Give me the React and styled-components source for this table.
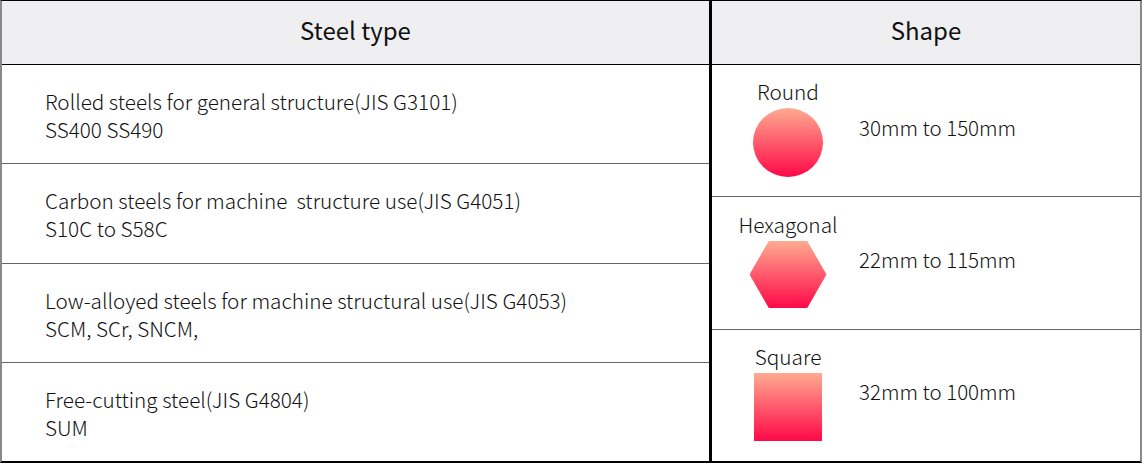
import React from "react";
import styled, { createGlobalStyle } from "styled-components";

const GlobalStyle = createGlobalStyle`
  body {
    margin: 0;
    background: #fff;
    font-family: "Noto Sans CJK JP", "Noto Sans", sans-serif;
    color: #111;
  }
`;

const Table = styled.div`
  box-sizing: border-box;
  width: 1142px;
  height: 463px;
  display: flex;
  border-top: 1px solid #000;
  border-bottom: 2px solid #000;
  border-left: 2px solid #888;
  border-right: 2px solid #888;
`;

const Column = styled.div`
  display: flex;
  flex-direction: column;
  width: ${(p) => p.$width || "auto"};
  flex: ${(p) => (p.$width ? "none" : 1)};
  border-left: ${(p) => (p.$divider ? "3px solid #000" : "none")};
`;

const Header = styled.div`
  box-sizing: border-box;
  height: 64px;
  flex: none;
  display: flex;
  align-items: center;
  justify-content: center;
  padding-bottom: 6px;
  background: #efeff1;
  border-bottom: 1px solid #000;
  font-size: 24px;
`;

const Row = styled.div`
  flex: 1;
  display: flex;
  align-items: center;
  border-top: ${(p) => (p.$first ? "none" : "1px solid #666")};
`;

const TypeText = styled.div`
  padding-left: 43px;
  padding-top: 2px;
  font-size: 20.7px;
  line-height: 28px;
  font-weight: 300;
`;

const ShapeBox = styled.div`
  width: 100px;
  margin-left: 26px;
  margin-bottom: 6px;
  display: flex;
  flex-direction: column;
  align-items: center;
`;

const Label = styled.div`
  font-size: 20.8px;
  line-height: 24px;
  font-weight: 300;
  margin-bottom: 5px;
`;

const grad = "linear-gradient(to bottom, #ffab90, #ff0848)";

const Circle = styled.div`
  width: 70px;
  height: 69px;
  border-radius: 50%;
  background: ${grad};
`;

const Hexagon = styled.div`
  width: 77px;
  height: 67px;
  background: ${grad};
  clip-path: polygon(25% 0, 75% 0, 100% 50%, 75% 100%, 25% 100%, 0 50%);
`;

const Square = styled.div`
  width: 68px;
  height: 68px;
  background: ${grad};
`;

const Range = styled.div`
  margin-left: 21px;
  margin-bottom: 8px;
  font-size: 20.5px;
  line-height: 26px;
  font-weight: 300;
`;

const types = [
  ["Rolled steels for general structure(JIS G3101)", "SS400 SS490"],
  ["Carbon steels for machine\u00a0 structure use(JIS G4051)", "S10C to S58C"],
  ["Low-alloyed steels for machine structural use(JIS G4053)", "SCM, SCr, SNCM,"],
  ["Free-cutting steel(JIS G4804)", "SUM"],
];

const shapes = [
  { label: "Round", Shape: Circle, range: "30mm to 150mm" },
  { label: "Hexagonal", Shape: Hexagon, range: "22mm to 115mm" },
  { label: "Square", Shape: Square, range: "32mm to 100mm" },
];

export default function App() {
  return (
    <>
      <GlobalStyle />
      <Table>
        <Column $width="707px">
          <Header>Steel type</Header>
          {types.map(([name, grades], i) => (
            <Row key={name} $first={i === 0}>
              <TypeText>
                {name}
                <br />
                {grades}
              </TypeText>
            </Row>
          ))}
        </Column>
        <Column $divider>
          <Header>Shape</Header>
          {shapes.map(({ label, Shape, range }, i) => (
            <Row key={label} $first={i === 0}>
              <ShapeBox>
                <Label>{label}</Label>
                <Shape />
              </ShapeBox>
              <Range>{range}</Range>
            </Row>
          ))}
        </Column>
      </Table>
    </>
  );
}
